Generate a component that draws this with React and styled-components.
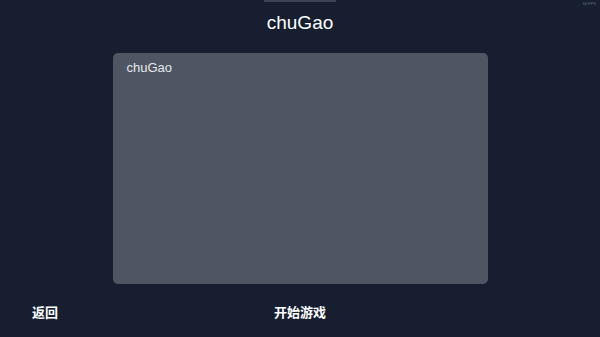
import React from "react";
import styled, { createGlobalStyle } from "styled-components";

const GlobalStyle = createGlobalStyle`
  html, body {
    margin: 0;
    padding: 0;
    background: #161e30;
  }
  body {
    font-family: "Liberation Sans", "Noto Sans CJK SC", Arial, sans-serif;
  }
`;

const Screen = styled.div`
  position: relative;
  width: 600px;
  height: 337px;
  background: #161e30;
  display: flex;
  flex-direction: column;
  align-items: center;
  overflow: hidden;
`;

const TopTab = styled.div`
  width: 72px;
  height: 2px;
  background: #3b4252;
`;

const Fps = styled.div`
  position: absolute;
  top: 1px;
  right: 4px;
  font-size: 4px;
  color: #6b7180;
`;

const Title = styled.h1`
  margin: 9px 0 0;
  font-size: 19px;
  font-weight: normal;
  color: #ffffff;
  line-height: 24px;
`;

const Panel = styled.div`
  box-sizing: border-box;
  margin-top: 18px;
  width: 375px;
  height: 231px;
  background: #4f5663;
  border-radius: 5px;
  padding: 7px 14px;
`;

const PanelText = styled.div`
  font-size: 13px;
  color: #e6e7ea;
  line-height: 16px;
`;

const Footer = styled.div`
  display: grid;
  grid-template-columns: 1fr auto 1fr;
  align-items: center;
  width: 100%;
  box-sizing: border-box;
  padding: 0 32px;
  margin-top: 18px;
`;

const FooterButton = styled.button`
  justify-self: ${(p) => p.align || "center"};
  background: transparent;
  border: none;
  padding: 0;
  font-family: inherit;
  font-size: 13px;
  font-weight: bold;
  color: #ffffff;
  cursor: pointer;
`;

export default function App() {
  return (
    <>
      <GlobalStyle />
      <Screen>
        <TopTab />
        <Fps>60 FPS</Fps>
        <Title>chuGao</Title>
        <Panel>
          <PanelText>chuGao</PanelText>
        </Panel>
        <Footer>
          <FooterButton align="start">返回</FooterButton>
          <FooterButton>开始游戏</FooterButton>
          <span />
        </Footer>
      </Screen>
    </>
  );
}
